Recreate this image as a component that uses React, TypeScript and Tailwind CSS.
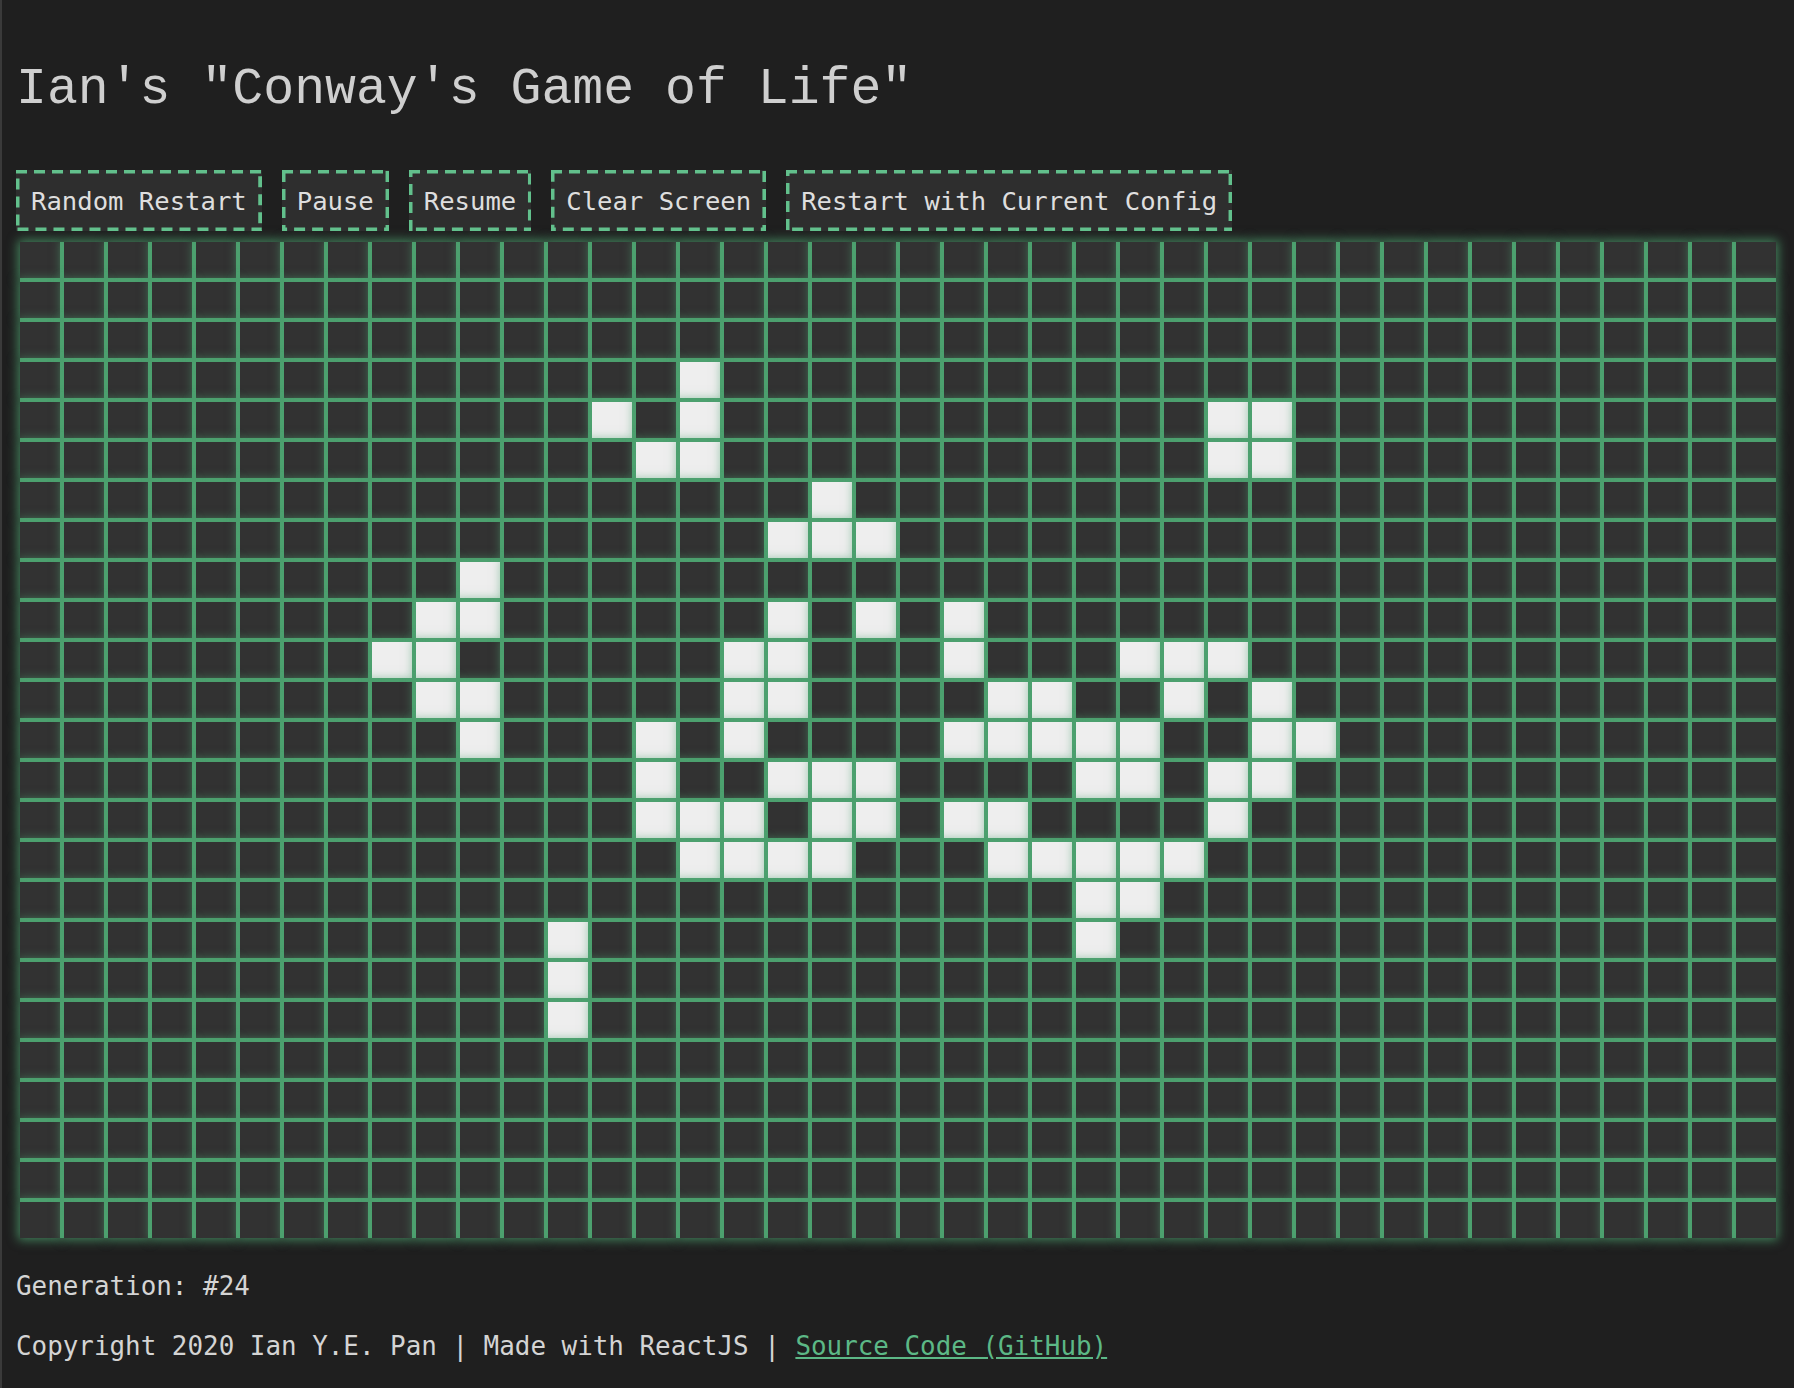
import React from "react";

const ROWS = 25;
const COLS = 40;

// live cells at generation 24, as "row,col"
const alive = new Set<string>([
  "3,15",
  "4,13", "4,15", "4,27", "4,28",
  "5,14", "5,15", "5,27", "5,28",
  "6,18",
  "7,17", "7,18", "7,19",
  "8,10",
  "9,9", "9,10", "9,17", "9,19", "9,21",
  "10,8", "10,9", "10,16", "10,17", "10,21", "10,25", "10,26", "10,27",
  "11,9", "11,10", "11,16", "11,17", "11,22", "11,23", "11,26", "11,28",
  "12,10", "12,14", "12,16", "12,21", "12,22", "12,23", "12,24", "12,25", "12,28", "12,29",
  "13,14", "13,17", "13,18", "13,19", "13,24", "13,25", "13,27", "13,28",
  "14,14", "14,15", "14,16", "14,18", "14,19", "14,21", "14,22", "14,27",
  "15,15", "15,16", "15,17", "15,18", "15,22", "15,23", "15,24", "15,25", "15,26",
  "16,24", "16,25",
  "17,12", "17,24",
  "18,12",
  "19,12",
]);

const buttons = [
  "Random Restart",
  "Pause",
  "Resume",
  "Clear Screen",
  "Restart with Current Config",
];

const Cell = ({ on }: { on: boolean }) => (
  <div
    className={
      on
        ? "bg-[#eeeeee] shadow-[0_0_10px_2px_rgba(80,165,115,0.75)]"
        : "bg-[#323232] shadow-[0_0_10px_2px_rgba(80,165,115,0.75)]"
    }
  />
);

// dashed outline drawn over the button; stroke is doubled and clipped by the svg
const DashedEdge = () => (
  <svg className="absolute inset-0 w-full h-full pointer-events-none">
    <rect
      x="0"
      y="0"
      width="100%"
      height="100%"
      fill="none"
      stroke="#62c08c"
      strokeWidth="7"
      strokeDasharray="11 7"
    />
  </svg>
);

const App = () => {
  const cells = [];
  for (let r = 0; r < ROWS; r++) {
    for (let c = 0; c < COLS; c++) {
      cells.push(<Cell key={`${r}-${c}`} on={alive.has(`${r},${c}`)} />);
    }
  }

  return (
    <div className="min-h-screen bg-[#1f1f1f] border-l-2 border-[#3a3a3a] pl-[14px] pt-[60px] pb-10 font-['DejaVu_Sans_Mono',monospace] text-[25.6px] text-[#dcdcdc]">
      <h1 className="font-['Liberation_Mono',monospace] text-[51.5px] leading-[58px] font-normal text-[#cfcfcf]">
        Ian's "Conway's Game of Life"
      </h1>

      <div className="mt-[52px] flex gap-5">
        {buttons.map((b) => (
          <button
            key={b}
            className="relative h-[61px] px-[15px] bg-[#2e2e2e] text-[#dedede] leading-[30px] whitespace-nowrap"
          >
            {b}
            <DashedEdge />
          </button>
        ))}
      </div>

      <div className="mt-[11px] ml-[4px] w-fit grid grid-cols-[repeat(40,40px)] auto-rows-[36px] gap-[4px] bg-[#4a9a6b]">
        {cells}
      </div>

      <p className="mt-[33px] leading-[30px] text-[25.9px] text-[#d4d4d4]">Generation: #24</p>
      <p className="mt-[30px] leading-[30px] text-[25.9px] text-[#d4d4d4]">
        Copyright 2020 Ian Y.E. Pan | Made with ReactJS |{" "}
        <a href="#" className="text-[#5cb886] underline">
          Source Code (GitHub)
        </a>
      </p>
    </div>
  );
};

export default App;
